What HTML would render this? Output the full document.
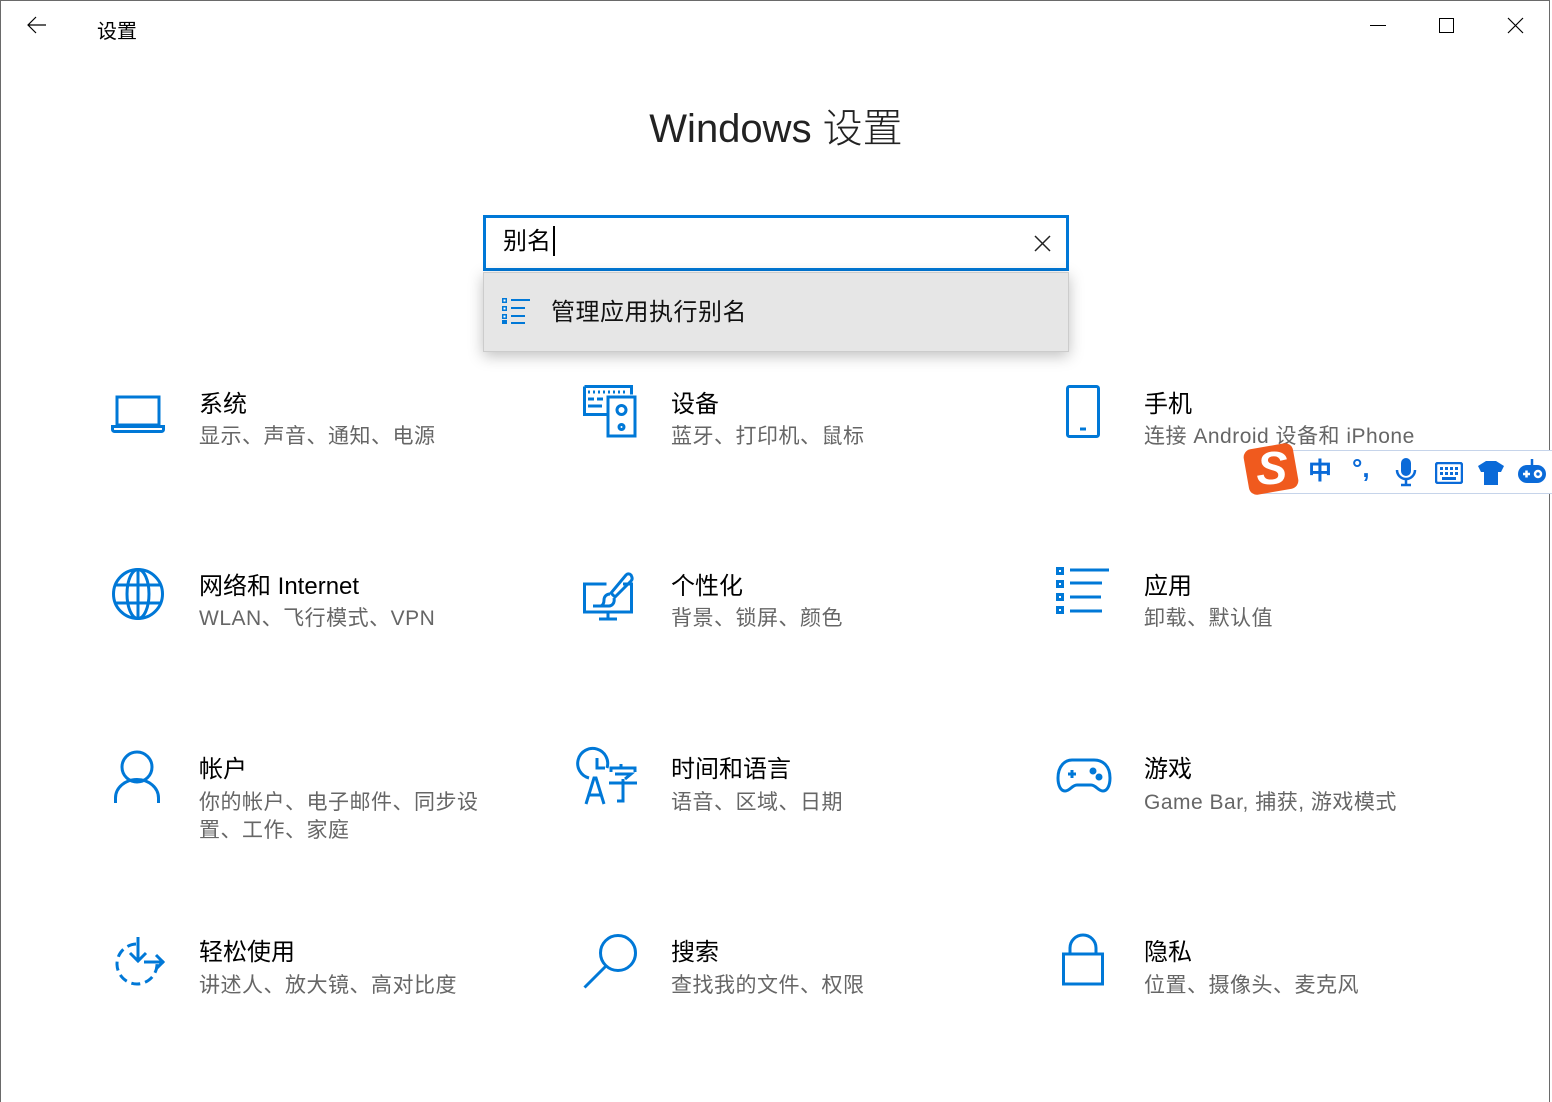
<!DOCTYPE html>
<html><head><meta charset="utf-8">
<style>
*{margin:0;padding:0;box-sizing:border-box}
html,body{width:1552px;height:1102px;overflow:hidden;background:#fff}
body{position:relative;font-family:"Liberation Sans","Noto Sans CJK SC",sans-serif;color:#000}
.frame{position:absolute;left:0;top:0;width:1550px;height:1102px;border:1px solid #6a6a6a;border-bottom:none}
.abs{position:absolute}
.t{position:absolute;font-size:24px;line-height:30px;color:#000;white-space:nowrap;margin-top:2px}
.s{position:absolute;font-size:21px;letter-spacing:0.5px;line-height:28px;color:#666;white-space:nowrap;margin-top:2px}
svg.i{position:absolute;overflow:visible}
svg.i *{stroke:#0078d7;fill:none;stroke-width:3}
</style></head><body>
<div class="frame"></div>
<svg class="abs" style="left:26px;top:16px" width="22" height="18"><path d="M20 9H2M10 1L2 9l8 8" stroke="#000" stroke-width="1.2" fill="none"/></svg>
<div class="abs" style="left:97px;top:19px;font-size:20px;line-height:26px">设置</div>
<div class="abs" style="left:1370px;top:25px;width:16px;height:1px;background:#000"></div>
<div class="abs" style="left:1439px;top:18px;width:15px;height:15px;border:1px solid #000"></div>
<svg class="abs" style="left:1507px;top:17px" width="17" height="17"><path d="M1 1L16 16M16 1L1 16" stroke="#000" stroke-width="1.2"/></svg>

<div class="abs" style="left:0;top:101px;width:1552px;text-align:center;font-size:40px;line-height:56px;color:#222;font-weight:300">Windows 设置</div>

<div class="abs" style="left:483px;top:215px;width:586px;height:56px;border:3px solid #0078d7;background:#fff"></div>
<div class="abs" style="left:503px;top:226px;font-size:24px;line-height:32px">别名</div>
<div class="abs" style="left:553px;top:226px;width:1.5px;height:30px;background:#000"></div>
<svg class="abs" style="left:1034px;top:235px" width="17" height="17"><path d="M1 1L16 16M16 1L1 16" stroke="#222" stroke-width="1.5"/></svg>
<div class="abs" style="left:483px;top:272px;width:586px;height:80px;background:#e6e6e6;border:1px solid #ccc;box-shadow:0 4px 14px rgba(0,0,0,.25)"></div>
<svg class="abs" style="left:502px;top:297px" width="30" height="28"><g fill="#0078d7"><rect x="0" y="1" width="5" height="5"/><rect x="0" y="9" width="5" height="5"/><rect x="0" y="17" width="5" height="5"/><rect x="0" y="23" width="5" height="4"/></g><g stroke="#0078d7" stroke-width="2"><path d="M9 3h19M9 11h14M9 19h14M9 26h14"/></g><g fill="#fff"><rect x="1.5" y="2.5" width="2" height="2"/><rect x="1.5" y="10.5" width="2" height="2"/><rect x="1.5" y="18.5" width="2" height="2"/></g></svg>
<div class="abs" style="left:551px;top:297px;font-size:24px;line-height:32px;color:#111;letter-spacing:0.5px">管理应用执行别名</div>

<svg class="i" style="left:111px;top:395px" width="55" height="38"><path d="M6 2h42v28H6z"/><path d="M1.5 31.5h51v3a2 2 0 0 1-2 2h-47a2 2 0 0 1-2-2z"/></svg>
<div class="t" style="left:199px;top:388px">系统</div>
<div class="s" style="left:199px;top:421px">显示、声音、通知、电源</div>

<svg class="i" style="left:583px;top:385px" width="54" height="54"><path d="M1.5 1.5h47v8M1.5 1.5v28h22"/><path d="M25 12h27v39H25z"/><circle cx="38.5" cy="25" r="4.5"/><circle cx="38.5" cy="42" r="2.5"/><g stroke-width="2.5"><path d="M5 7h2M10 7h2M15 7h2M20 7h2M25 7h2M30 7h2M35 7h2M40 7h2M5 14h6M14 14h6M5 21h14"/></g></svg>
<div class="t" style="left:671px;top:388px">设备</div>
<div class="s" style="left:671px;top:421px">蓝牙、打印机、鼠标</div>

<svg class="i" style="left:1066px;top:385px" width="34" height="54"><rect x="1.5" y="1.5" width="31" height="50" rx="2"/><path d="M14 44h6"/></svg>
<div class="t" style="left:1144px;top:388px">手机</div>
<div class="s" style="left:1144px;top:421px">连接 Android 设备和 iPhone</div>

<svg class="i" style="left:112px;top:568px" width="54" height="54"><circle cx="26" cy="26" r="24.5"/><ellipse cx="26" cy="26" rx="11" ry="24.5"/><path d="M26 1.5v49M3 17h46M3 35h46"/></svg>
<div class="t" style="left:199px;top:570px">网络和 Internet</div>
<div class="s" style="left:199px;top:603px">WLAN、飞行模式、VPN</div>

<svg class="i" style="left:583px;top:573px" width="52" height="48"><path d="M40 11h8.5v28h-47v-28h22"/><path d="M16 46h18M25 39v7"/><path d="M10 33h10M48 2c-2-2-4-1-5 0L28 20l4 4L48 8c2-2 1-4 0-6z"/><path d="M27 21c-4 0-6 3-6 6s-1 5-3 6h8c3 0 6-3 5-8"/></svg>
<div class="t" style="left:671px;top:570px">个性化</div>
<div class="s" style="left:671px;top:603px">背景、锁屏、颜色</div>

<svg class="i" style="left:1056px;top:567px" width="54" height="50"><rect x="0" y="0" width="8" height="8" style="fill:#0078d7;stroke:none"/><rect x="0" y="13" width="8" height="8" style="fill:#0078d7;stroke:none"/><rect x="0" y="26" width="8" height="8" style="fill:#0078d7;stroke:none"/><rect x="0" y="39" width="8" height="8" style="fill:#0078d7;stroke:none"/><rect x="3" y="3" width="2" height="2" style="fill:#fff;stroke:none"/><rect x="3" y="16" width="2" height="2" style="fill:#fff;stroke:none"/><rect x="3" y="29" width="2" height="2" style="fill:#fff;stroke:none"/><rect x="3" y="42" width="2" height="2" style="fill:#fff;stroke:none"/><path d="M14 3h39M14 16h32M14 30h31M14 44h32"/></svg>
<div class="t" style="left:1144px;top:570px">应用</div>
<div class="s" style="left:1144px;top:603px">卸载、默认值</div>

<svg class="i" style="left:114px;top:750px" width="48" height="54"><circle cx="23" cy="17" r="15"/><path d="M1.5 53v-5a21.5 18.5 0 0 1 43 0v5"/></svg>
<div class="t" style="left:199px;top:753px">帐户</div>
<div class="s" style="left:199px;top:787px">你的帐户、电子邮件、同步设<br>置、工作、家庭</div>

<svg class="i" style="left:583px;top:750px" width="56" height="56"><path d="M24 18A15 15 0 1 0 6 28"/><path d="M14 8v10h8"/><path d="M3 54l8-26h2l8 26M6 45h12"/><g stroke-width="3"><path d="M38 14v5M28 22v-4h24v4M32 24h16l-6 5M26 33h28M40 29v22h-6"/></g></svg>
<div class="t" style="left:671px;top:753px">时间和语言</div>
<div class="s" style="left:671px;top:787px">语音、区域、日期</div>

<svg class="i" style="left:1056px;top:758px" width="56" height="36"><path d="M16 2h22c9 0 16 6 16 18 0 8-3 13-7 13-5 0-7-6-12-6h-14c-5 0-7 6-12 6-4 0-7-5-7-13C2 8 9 2 16 2z"/><path d="M12 16h8M16 12v8" stroke-width="2.5"/><circle cx="37" cy="13" r="2" style="fill:#0078d7"/><circle cx="43" cy="19" r="2" style="fill:#0078d7"/></svg>
<div class="t" style="left:1144px;top:753px">游戏</div>
<div class="s" style="left:1144px;top:787px">Game Bar, 捕获, 游戏模式</div>

<svg class="i" style="left:110px;top:936px" width="58" height="50"><path d="M26 8A20 20 0 1 0 47 28" stroke-dasharray="9 5"/><path d="M28 1v24M20 17l8 8 8-8"/><path d="M34 26h20M46 19l7 7-7 7"/></svg>
<div class="t" style="left:199px;top:936px">轻松使用</div>
<div class="s" style="left:199px;top:970px">讲述人、放大镜、高对比度</div>

<svg class="i" style="left:583px;top:933px" width="56" height="56"><circle cx="35" cy="20" r="17.5"/><path d="M23 33L1.5 54.5"/></svg>
<div class="t" style="left:671px;top:936px">搜索</div>
<div class="s" style="left:671px;top:970px">查找我的文件、权限</div>

<svg class="i" style="left:1062px;top:934px" width="42" height="54"><path d="M8 20v-6a13 13 0 0 1 26 0v6"/><rect x="1.5" y="20" width="39" height="30"/></svg>
<div class="t" style="left:1144px;top:936px">隐私</div>
<div class="s" style="left:1144px;top:970px">位置、摄像头、麦克风</div>

<div class="abs" style="left:1262px;top:450px;width:290px;height:44px;background:#fff;border:1px solid #c6d4ea;border-right:none"></div>
<div class="abs" style="left:1246px;top:446px;width:50px;height:46px;background:#f05a1e;border-radius:8px;transform:rotate(-10deg)"></div>
<div class="abs" style="left:1250px;top:444px;width:44px;height:48px;color:#fff;font-size:46px;font-weight:bold;line-height:48px;text-align:center;font-style:italic">S</div>
<div class="abs" style="left:1308px;top:458px;color:#0a6ad8;font-size:24px;font-weight:bold;line-height:28px">中</div>
<div class="abs" style="left:1352px;top:454px;color:#0a6ad8;font-size:26px;font-weight:bold;line-height:28px">°,</div>
<svg class="abs" style="left:1395px;top:458px" width="22" height="30"><rect x="6" y="0" width="10" height="18" rx="5" fill="#0a6ad8"/><path d="M2 12a9 9 0 0 0 18 0M11 21v6M6 27h10" stroke="#0a6ad8" stroke-width="2.5" fill="none"/></svg>
<svg class="abs" style="left:1435px;top:462px" width="28" height="22"><rect x="1" y="1" width="26" height="20" rx="2" fill="none" stroke="#0a6ad8" stroke-width="2.5"/><g fill="#0a6ad8"><rect x="5" y="5" width="3" height="3"/><rect x="10" y="5" width="3" height="3"/><rect x="15" y="5" width="3" height="3"/><rect x="20" y="5" width="3" height="3"/><rect x="5" y="10" width="3" height="3"/><rect x="10" y="10" width="3" height="3"/><rect x="15" y="10" width="3" height="3"/><rect x="20" y="10" width="3" height="3"/><rect x="7" y="15" width="14" height="3"/></g></svg>
<svg class="abs" style="left:1477px;top:460px" width="28" height="26"><path d="M9 1h10l8 5-3 6h-3v13H7V12H4L1 6z" fill="#0a6ad8"/></svg>
<svg class="abs" style="left:1517px;top:457px" width="30" height="30"><path d="M15 2v6" stroke="#0a6ad8" stroke-width="2.5"/><rect x="1" y="8" width="28" height="18" rx="9" fill="#0a6ad8"/><path d="M6 17h7M9.5 13.5v7" stroke="#fff" stroke-width="2.5"/><circle cx="21" cy="17" r="3" fill="none" stroke="#fff" stroke-width="2.5"/></svg>
</body></html>
